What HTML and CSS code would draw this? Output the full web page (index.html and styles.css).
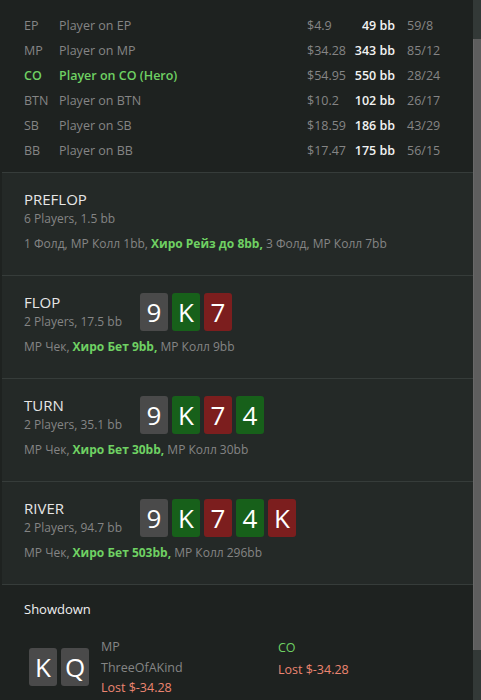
FILE: index.html
```html
<!DOCTYPE html>
<html lang="en">
<head>
    <meta charset="UTF-8">
    <meta name="viewport" content="width=device-width, initial-scale=1.0">
    <title>Hand History</title>
    <link rel="stylesheet" href="styles.css">
</head>
<body>
    <div class="scroller" id="scroller">
        <div class="players">
            <div class="player-row"><span class="pos">EP</span><span class="name">Player on EP</span><span class="money">$4.9</span><span class="bb">49 bb</span><span class="stats">59/8</span></div>
            <div class="player-row"><span class="pos">MP</span><span class="name">Player on MP</span><span class="money">$34.28</span><span class="bb">343 bb</span><span class="stats">85/12</span></div>
            <div class="player-row hero"><span class="pos">CO</span><span class="name">Player on CO (Hero)</span><span class="money">$54.95</span><span class="bb">550 bb</span><span class="stats">28/24</span></div>
            <div class="player-row"><span class="pos">BTN</span><span class="name">Player on BTN</span><span class="money">$10.2</span><span class="bb">102 bb</span><span class="stats">26/17</span></div>
            <div class="player-row"><span class="pos">SB</span><span class="name">Player on SB</span><span class="money">$18.59</span><span class="bb">186 bb</span><span class="stats">43/29</span></div>
            <div class="player-row"><span class="pos">BB</span><span class="name">Player on BB</span><span class="money">$17.47</span><span class="bb">175 bb</span><span class="stats">56/15</span></div>
        </div>

        <div class="street">
            <div class="street-head">
                <div class="street-info">
                    <div class="street-title">PREFLOP</div>
                    <div class="street-sub">6 Players, 1.5 bb</div>
                </div>
            </div>
            <div class="actions">1 Фолд, MP Колл 1bb, <b class="hero-act">Хиро Рейз до 8bb,</b> 3 Фолд, MP Колл 7bb</div>
        </div>

        <div class="street">
            <div class="street-head">
                <div class="street-info">
                    <div class="street-title">FLOP</div>
                    <div class="street-sub">2 Players, 17.5 bb</div>
                </div>
                <div class="cards">
                    <span class="card gray">9</span><span class="card green">K</span><span class="card red">7</span>
                </div>
            </div>
            <div class="actions">MP Чек, <b class="hero-act">Хиро Бет 9bb,</b> MP Колл 9bb</div>
        </div>

        <div class="street">
            <div class="street-head">
                <div class="street-info">
                    <div class="street-title">TURN</div>
                    <div class="street-sub">2 Players, 35.1 bb</div>
                </div>
                <div class="cards">
                    <span class="card gray">9</span><span class="card green">K</span><span class="card red">7</span><span class="card green">4</span>
                </div>
            </div>
            <div class="actions">MP Чек, <b class="hero-act">Хиро Бет 30bb,</b> MP Колл 30bb</div>
        </div>

        <div class="street">
            <div class="street-head">
                <div class="street-info">
                    <div class="street-title">RIVER</div>
                    <div class="street-sub">2 Players, 94.7 bb</div>
                </div>
                <div class="cards">
                    <span class="card gray">9</span><span class="card green">K</span><span class="card red">7</span><span class="card green">4</span><span class="card red">K</span>
                </div>
            </div>
            <div class="actions">MP Чек, <b class="hero-act">Хиро Бет 503bb,</b> MP Колл 296bb</div>
        </div>

        <div class="showdown">
            <div class="showdown-title">Showdown</div>
            <div class="showdown-row">
                <div class="showdown-player">
                    <div class="cards sd-cards">
                        <span class="card gray">K</span><span class="card gray">Q</span>
                    </div>
                    <div class="showdown-text">
                        <div class="sd-pos">MP</div>
                        <div class="sd-hand">ThreeOfAKind</div>
                        <div class="sd-lost">Lost $-34.28</div>
                    </div>
                </div>
                <div class="showdown-text hero-col">
                    <div class="sd-pos hero-pos">CO</div>
                    <div class="sd-lost">Lost $-34.28</div>
                </div>
            </div>
        </div>
    </div>
    <div class="scrollbar"><div class="scroll-thumb"></div></div>

    <script>
        document.getElementById('scroller').scrollTop = 43;
    </script>
</body>
</html>
```

FILE: styles.css
```css
* {
    margin: 0;
    padding: 0;
    box-sizing: border-box;
}

html, body {
    height: 100%;
    overflow: hidden;
}

body {
    display: flex;
    font-family: 'Segoe UI', 'Open Sans', sans-serif;
    font-size: 12px;
    background: #1e2220;
    color: #8c8c8c;
}

.scroller {
    flex: 1;
    height: 700px;
    overflow: hidden;
    padding-left: 2px;
    background: #1e2220;
}

.scrollbar {
    width: 8px;
    height: 700px;
    background: #333937;
}

.scroll-thumb {
    margin-top: 39px;
    height: 611px;
    background: #5e5e5e;
    border-left: 1px solid #686868;
}

.players {
    background: #1e2220;
    padding: 56px 0 9px 22px;
    border-bottom: 1px solid #363c3a;
}

.player-row {
    display: grid;
    grid-template-columns: 35px 248px 44px 44px 1fr;
    height: 25px;
    align-items: center;
    font-size: 12.5px;
    color: #858585;
}

.player-row .name {
    white-space: nowrap;
}

.player-row .bb {
    text-align: right;
    white-space: nowrap;
    color: #f2f2f2;
    font-weight: 600;
}

.player-row .stats {
    padding-left: 12px;
}

.player-row.hero .pos,
.player-row.hero .name {
    color: #6fd163;
    font-weight: 600;
}

.street {
    background: #242927;
    padding: 16px 0 22px 22px;
    border-bottom: 1px solid #363c3a;
}

.street-head {
    display: flex;
    align-items: center;
    gap: 18px;
}

.street-title {
    font-size: 15px;
    line-height: 20px;
    color: #e6e6e6;
}

.street-sub {
    line-height: 20px;
    color: #858585;
}

.actions {
    margin-top: 6px;
    line-height: 18px;
    color: #858585;
}

.hero-act {
    color: #6fd163;
    font-weight: 700;
}

.cards {
    display: flex;
    gap: 4px;
}

.card {
    display: flex;
    align-items: center;
    justify-content: center;
    width: 28px;
    height: 38px;
    border-radius: 3px;
    font-size: 26px;
    color: #fff;
}

.card.gray {
    background: #4a4a4a;
}

.card.green {
    background: #17601a;
}

.card.red {
    background: #7c1e1e;
}

.showdown {
    background: #1e2220;
    padding: 15px 0 60px 22px;
}

.showdown-title {
    color: #f0f0f0;
    font-size: 13px;
    line-height: 18px;
}

.showdown-row {
    display: flex;
    margin-top: 19px;
}

.showdown-player {
    display: flex;
    align-items: flex-start;
    gap: 12px;
    width: 254px;
    padding-left: 5px;
}

.sd-cards {
    margin-top: 11px;
}

.showdown-text {
    line-height: 20.5px;
    font-size: 12.5px;
}

.sd-pos,
.sd-hand {
    color: #858585;
}

.sd-lost {
    color: #ec8571;
}

.hero-col {
    line-height: 22px;
}

.hero-pos {
    color: #6fd163;
}
```
